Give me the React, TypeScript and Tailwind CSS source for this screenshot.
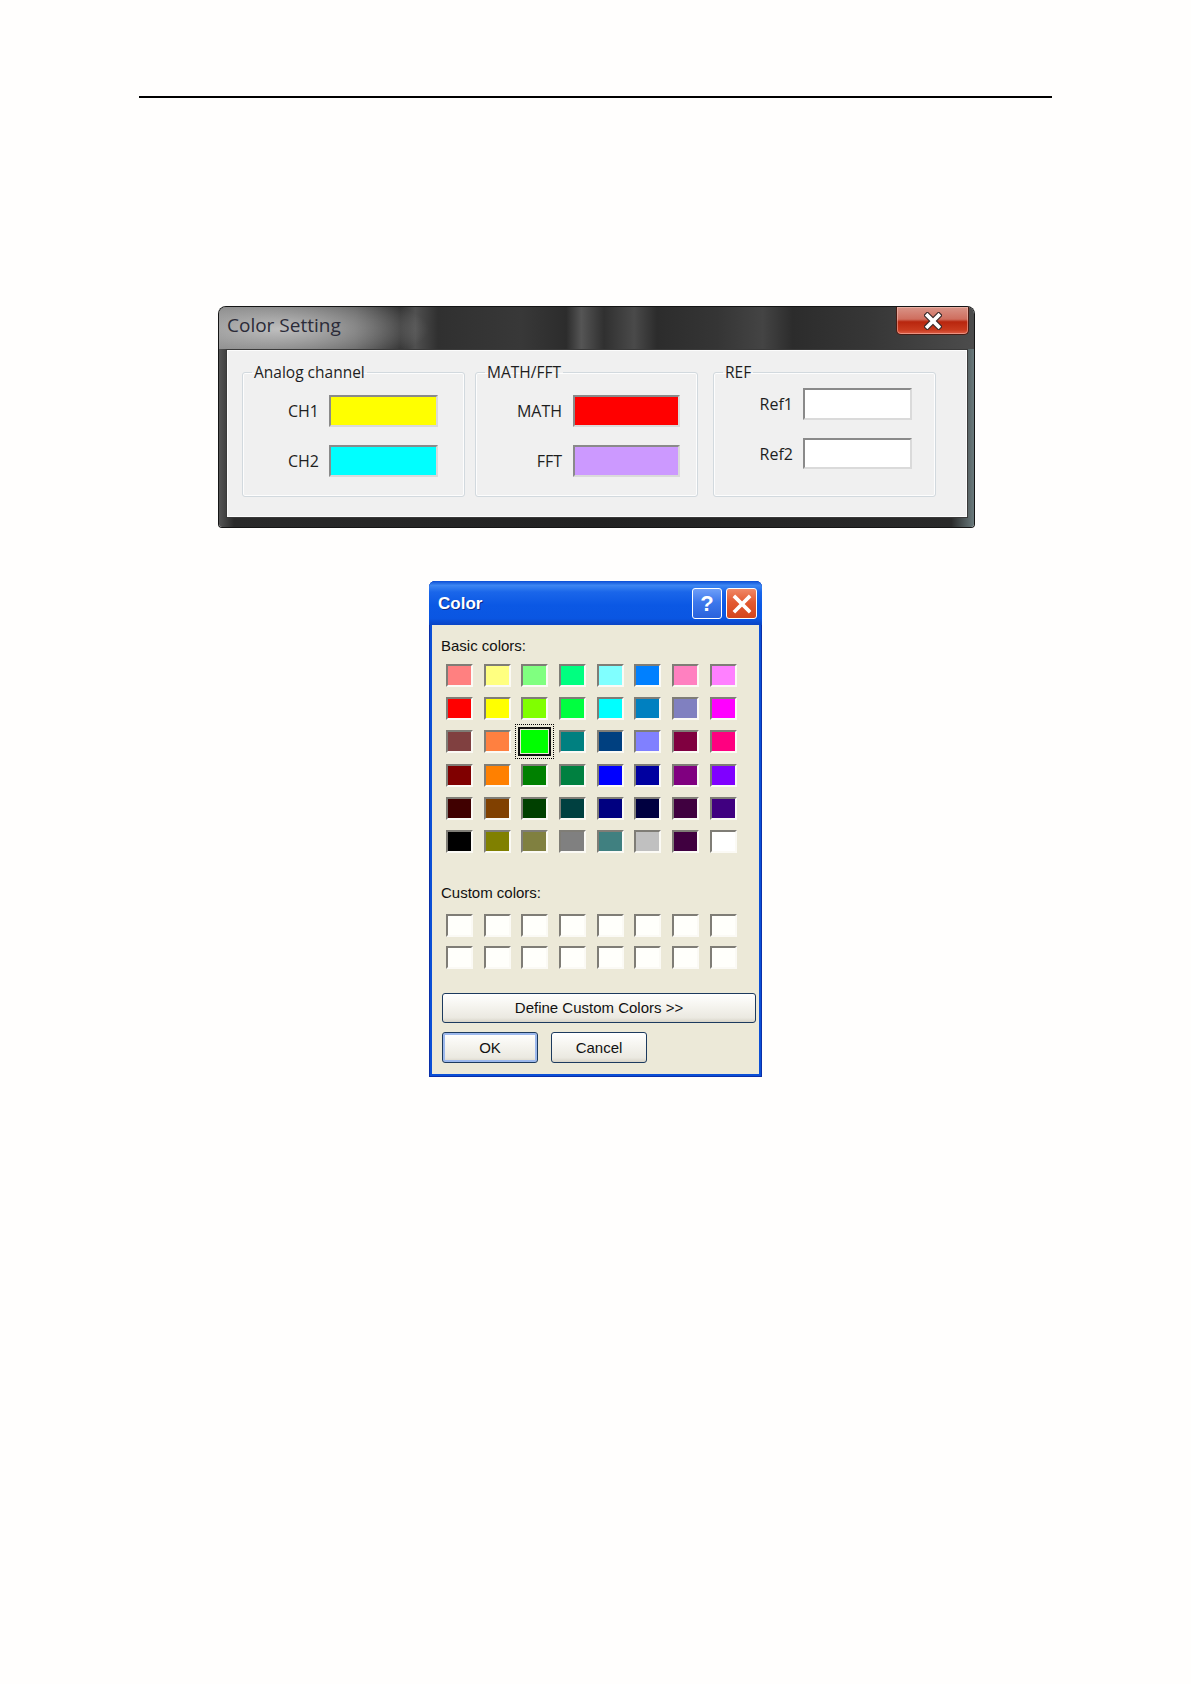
import React from 'react';

const BASIC: string[][] = [
  ['#ff8080', '#ffff80', '#80ff80', '#00ff80', '#80ffff', '#0080ff', '#ff80c0', '#ff80ff'],
  ['#ff0000', '#ffff00', '#80ff00', '#00ff40', '#00ffff', '#0080c0', '#8080c0', '#ff00ff'],
  ['#804040', '#ff8040', '#00ff00', '#008080', '#004080', '#8080ff', '#800040', '#ff0080'],
  ['#800000', '#ff8000', '#008000', '#008040', '#0000ff', '#0000a0', '#800080', '#8000ff'],
  ['#400000', '#804000', '#004000', '#004040', '#000080', '#000040', '#400040', '#400080'],
  ['#000000', '#808000', '#808040', '#808080', '#408080', '#c0c0c0', '#400040', '#ffffff'],
];

function ColorBox({ color, className }: { color: string; className: string }) {
  return (
    <div
      className={`border-2 border-t-[#8a8a8a] border-l-[#8a8a8a] border-r-[#dadada] border-b-[#dadada] ${className}`}
      style={{ backgroundColor: color }}
    />
  );
}

function Swatch({ color, selected }: { color: string; selected?: boolean }) {
  if (selected) {
    return (
      <div className="relative h-[23px] w-[27px]">
        <div className="absolute -inset-[6px] border border-dotted border-black" />
        <div className="absolute -inset-[3px] border-2 border-[#111]" />
        <div className="h-full w-full" style={{ backgroundColor: color }} />
      </div>
    );
  }
  return (
    <div
      className="h-[23px] w-[27px] border-2 border-t-[#7f7d76] border-l-[#7f7d76] border-r-[#fbfaf5] border-b-[#fbfaf5]"
      style={{ backgroundColor: color }}
    />
  );
}

function XGlyph({ size, stroke, outline }: { size: number; stroke: number; outline?: boolean }) {
  return (
    <svg width={size} height={size} viewBox="0 0 16 16">
      {outline && (
        <path d="M3 3 L13 13 M13 3 L3 13" stroke="#3a2a2a" strokeWidth={stroke + 2} strokeLinecap="square" />
      )}
      <path d="M3 3 L13 13 M13 3 L3 13" stroke="#ffffff" strokeWidth={stroke} strokeLinecap="square" />
    </svg>
  );
}

function ColorSetting() {
  return (
    <div className="ml-[219px] mt-[209px] flex h-[220px] w-[755px] flex-col rounded-t-[7px] rounded-b-[3px] bg-[linear-gradient(90deg,#555_0%,#2a2a2a_2%,#222_50%,#2a2a2a_97%,#6a7a7c_100%)] shadow-[0_0_0_1px_#151515] font-['Open_Sans',sans-serif]">
      {/* glass title bar */}
      <div className="flex h-[42px] items-start justify-between rounded-t-[7px] bg-[radial-gradient(ellipse_150px_38px_at_60px_22px,rgba(200,200,200,0.9),rgba(200,200,200,0)),linear-gradient(90deg,#7a7a7a_0%,#555_18%,#333_24%,#505050_26%,#303030_29%,#383838_40%,#2c2c2c_46%,#555_48%,#303030_51%,#4a4a4a_55%,#2c2c2c_58%,#353535_66%,#444_72%,#2c2c2c_76%,#363636_86%,#4c4c4c_100%)]">
        <span className="ml-[8px] mt-[4px] text-[19px] leading-[28px] text-[#2b2b38]">Color Setting</span>
        <button
          type="button"
          className="mr-[5px] flex h-[28px] w-[73px] items-center justify-center rounded-b-[5px] border border-t-0 border-[#4a1c14] bg-[linear-gradient(180deg,#d99488_0%,#cf6e5e_45%,#b8260e_55%,#c83a1e_85%,#e0604a_100%)] shadow-[inset_0_0_0_1px_rgba(255,210,200,0.45)]"
        >
          <XGlyph size={18} stroke={3.2} outline />
        </button>
      </div>

      <div className="ml-[7px] mr-[6px] flex h-[169px] border border-[#3a3a3a] bg-[#f0f0f0] pl-[15px] pt-[11px] shadow-[inset_0_0_0_1px_#fcfcfc]">
        <fieldset className="h-[136px] w-[223px] rounded-[3px] border border-[#d2d9de] shadow-[inset_0_0_0_1px_#fdfdfd]">
          <legend className="ml-[9px] px-[2px] text-[15.5px] leading-[22px] text-[#1e1e1e]">Analog channel</legend>
          <div className="mt-[12px] grid grid-cols-[76px_109px] items-center gap-x-[10px] gap-y-[18px] text-[16px] text-[#1e1e1e]">
            <span className="text-right">CH1</span>
            <ColorBox color="#ffff00" className="h-[32px]" />
            <span className="text-right">CH2</span>
            <ColorBox color="#00ffff" className="h-[32px]" />
          </div>
        </fieldset>

        <fieldset className="ml-[10px] h-[136px] w-[223px] rounded-[3px] border border-[#d2d9de] shadow-[inset_0_0_0_1px_#fdfdfd]">
          <legend className="ml-[9px] px-[2px] text-[15.5px] leading-[22px] text-[#1e1e1e]">MATH/FFT</legend>
          <div className="mt-[12px] grid grid-cols-[86px_107px] items-center gap-x-[11px] gap-y-[18px] text-[16px] text-[#1e1e1e]">
            <span className="text-right">MATH</span>
            <ColorBox color="#ff0000" className="h-[32px]" />
            <span className="text-right">FFT</span>
            <ColorBox color="#cc99ff" className="h-[32px]" />
          </div>
        </fieldset>

        <fieldset className="ml-[15px] h-[136px] w-[223px] rounded-[3px] border border-[#d2d9de] shadow-[inset_0_0_0_1px_#fdfdfd]">
          <legend className="ml-[9px] px-[2px] text-[15.5px] leading-[22px] text-[#1e1e1e]">REF</legend>
          <div className="mt-[5px] grid grid-cols-[79px_109px] items-center gap-x-[10px] gap-y-[18px] text-[16px] text-[#1e1e1e]">
            <span className="text-right">Ref1</span>
            <ColorBox color="#ffffff" className="h-[32px]" />
            <span className="text-right">Ref2</span>
            <ColorBox color="#ffffff" className="h-[31px]" />
          </div>
        </fieldset>
      </div>
    </div>
  );
}

function XpButton({ label, className }: { label: string; className: string }) {
  return (
    <button
      type="button"
      className={`flex items-center justify-center rounded-[3px] border border-[#1c3a5e] bg-[linear-gradient(180deg,#ffffff_0%,#f6f5f0_40%,#ebe9e1_85%,#d8d4c8_100%)] text-[15px] text-[#111] ${className}`}
    >
      {label}
    </button>
  );
}

function ColorDialog() {
  return (
    <div className="ml-[429px] mt-[54px] flex h-[496px] w-[333px] flex-col rounded-t-[6px] bg-[#0b4fd6] font-['Liberation_Sans',Arial,sans-serif] shadow-[inset_0_0_0_1px_#0a2fa8]">
      <div className="flex h-[44px] items-start justify-between rounded-t-[6px] bg-[linear-gradient(180deg,#0b4ed6_0%,#3d86f2_10%,#1a66ea_25%,#0b58e4_55%,#0a56e2_85%,#0a44c4_100%)] pl-[9px] pr-[5px]">
        <span className="mt-[13px] text-[17px] font-bold leading-[20px] text-white [text-shadow:1px_1px_0_#0a2a8a]">
          Color
        </span>
        <div className="mt-[7px] flex gap-[4px]">
          <button
            type="button"
            className="flex h-[31px] w-[30px] items-center justify-center rounded-[3px] border border-white bg-[linear-gradient(180deg,#6e9ef8_0%,#3d78ec_45%,#2a62dc_100%)] text-[22px] font-bold leading-none text-white"
          >
            ?
          </button>
          <button
            type="button"
            className="flex h-[31px] w-[31px] items-center justify-center rounded-[3px] border border-white bg-[linear-gradient(180deg,#f08866_0%,#e35a32_45%,#d4451c_100%)]"
          >
            <XGlyph size={22} stroke={2.6} />
          </button>
        </div>
      </div>

      <div className="mx-[3px] mb-[3px] flex flex-1 flex-col bg-[#ece9d8] pl-[9px] pt-[12px] text-[15px] leading-[17px] text-[#111]">
        <span>Basic colors:</span>
        <div className="ml-[5px] mt-[10px] grid grid-cols-[repeat(8,27px)] gap-x-[10.7px] gap-y-[10.2px]">
          {BASIC.map((row, r) =>
            row.map((c, i) => <Swatch key={`${r}-${i}`} color={c} selected={r === 2 && i === 2} />),
          )}
        </div>

        <span className="mt-[31px]">Custom colors:</span>
        <div className="ml-[5px] mt-[13px] grid grid-cols-[repeat(8,27px)] gap-x-[10.7px] gap-y-[9px]">
          {Array.from({ length: 16 }).map((_, i) => (
            <Swatch key={i} color="#fffffb" />
          ))}
        </div>

        <XpButton label="Define Custom Colors >>" className="ml-[1px] mt-[24px] h-[30px] w-[314px]" />
        <div className="ml-[1px] mt-[9px] flex gap-[13px]">
          <XpButton label="OK" className="h-[31px] w-[96px] shadow-[inset_0_0_0_2px_#9cb8ec]" />
          <XpButton label="Cancel" className="h-[31px] w-[96px]" />
        </div>
      </div>
    </div>
  );
}

export default function App() {
  return (
    <div className="min-h-[1684px] w-[1191px] overflow-hidden bg-[#fffefd] pt-[96px]">
      <div className="ml-[139px] h-[2px] w-[913px] bg-black" />
      <ColorSetting />
      <ColorDialog />
    </div>
  );
}
